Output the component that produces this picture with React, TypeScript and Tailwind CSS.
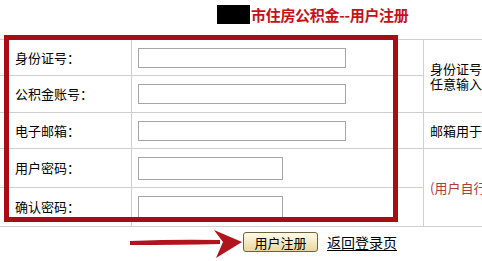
import React from 'react';

const font = { fontFamily: '"Noto Sans CJK SC", "Liberation Sans", sans-serif' };

const rows = [
  { label: '身份证号：', wide: true, h: 'h-[36px]' },
  { label: '公积金账号：', wide: true, h: 'h-[37px]' },
  { label: '电子邮箱：', wide: true, h: 'h-[36px]' },
  { label: '用户密码：', wide: false, h: 'h-[39px]' },
  { label: '确认密码：', wide: false, h: 'h-[39px]' },
];

const Arrow: React.FC = () => (
  <svg className="absolute left-[128px] top-[228px]" width="118" height="32" viewBox="0 0 118 32">
    <path d="M2 13 Q50 11 92 12 L92 16 Q50 17 2 17 Z" fill="#b0141c" />
    <path d="M86 2 L114 14 L88 30 L95 14 Z" fill="#b0141c" />
  </svg>
);

const App: React.FC = () => {
  return (
    <div className="relative w-[482px] h-[261px] overflow-hidden bg-white text-[13px] text-black" style={font}>
      {/* Title */}
      <div className="h-[39px] flex items-start pl-[217px] pt-[5px]">
        <span className="w-[33px] h-[19px] bg-black" />
        <span className="ml-[1px] text-[15px] leading-[20px] font-bold text-[#c8101a] tracking-[-0.3px]">市住房公积金--用户注册</span>
      </div>

      {/* Form grid */}
      <div className="grid grid-cols-[132px_292px_200px] w-[624px] border-t border-[#cfcfcf]">
        {rows.map((r, i) => (
          <React.Fragment key={r.label}>
            <div className={`${r.h} flex items-center pl-[15px] border-r border-b border-[#cfcfcf]`}>{r.label}</div>
            <div className={`${r.h} flex items-center pl-[6px] border-r border-b border-[#cfcfcf]`}>
              <input
                type={r.wide ? 'text' : 'password'}
                className={r.wide ? 'w-[208px] h-[20px] border border-[#a5a5a5] bg-white outline-none' : 'w-[145px] h-[23px] border border-[#a5a5a5] bg-white outline-none'}
              />
            </div>
            {i === 0 && (
              <div className="row-span-2 flex flex-col justify-center pl-[6px] border-b border-[#cfcfcf] leading-[15px] whitespace-nowrap">
                <span>身份证号和公积金账号</span>
                <span>任意输入一个即可</span>
              </div>
            )}
            {i === 2 && (
              <div className="flex items-center pl-[6px] border-b border-[#cfcfcf] whitespace-nowrap">邮箱用于找回密码</div>
            )}
            {i === 3 && (
              <div className="row-span-2 flex items-center pl-[6px] border-b border-[#cfcfcf] whitespace-nowrap text-[#b03a3a]">(用户自行设置密码)</div>
            )}
          </React.Fragment>
        ))}
      </div>

      {/* Actions */}
      <div className="flex items-center pl-[243px] pt-[5px]">
        <button className="w-[75px] h-[20px] rounded-[3px] border border-[#6e6140] bg-gradient-to-b from-[#fffbe8] to-[#ead7a0] text-[13px] leading-none text-black">
          用户注册
        </button>
        <a className="ml-[9px] text-[14px] leading-[16px] underline underline-offset-2 text-black cursor-pointer">返回登录页</a>
      </div>

      {/* Hand-drawn highlight */}
      <div className="absolute left-[4px] top-[35px] w-[394px] h-[187px] border-[5px] border-[#a80d14] pointer-events-none" />
      <Arrow />
    </div>
  );
};

export default App;
